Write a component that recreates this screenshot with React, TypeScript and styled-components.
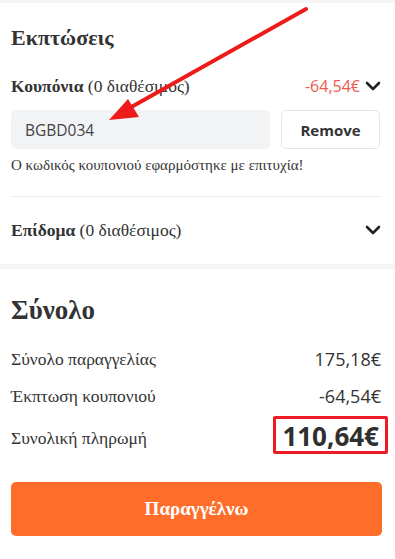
import React from "react";
import styled, {createGlobalStyle} from "styled-components";

const GlobalStyle = createGlobalStyle`
  body {
    margin: 0;
    background: #ffffff;
    font-family: "Liberation Serif", "Times New Roman", serif;
    color: #333333;
  }
`;

const Page = styled.div`
  position: relative;
  width: 395px;
  display: flex;
  flex-direction: column;
`;

const Band = styled.div<{ h: number }>`
  height: ${p => p.h}px;
  background: #f4f4f5;
`;

const Section = styled.section`
  display: flex;
  flex-direction: column;
  padding: 0 14px 0 11px;
`;

const Heading = styled.h2<{ size: number }>`
  margin: 0;
  font-size: ${p => p.size}px;
  font-weight: 700;
  line-height: ${p => p.size + 5}px;
  color: #333;
`;

const RowHead = styled.div`
  display: flex;
  justify-content: space-between;
  align-items: center;
  height: 24px;
  font-size: 17.5px;
  line-height: 24px;
`;

const Label = styled.span`
  font-weight: 700;
`;

const Muted = styled.span`
  font-weight: 400;
`;

const RightSide = styled.div`
  display: flex;
  align-items: center;
  gap: 5px;
`;

const Amount = styled.span<{ red?: boolean }>`
  font-family: "Open Sans", sans-serif;
  font-size: ${p => (p.red ? 16 : 18)}px;
  color: ${p => (p.red ? "#ec5a4f" : "#333")};
`;

const CouponRow = styled.div`
  display: flex;
  gap: 11px;
  margin-right: 1px;
`;

const CouponInput = styled.div`
  flex: 1;
  height: 39px;
  display: flex;
  align-items: center;
  padding-left: 14px;
  background: #f2f3f5;
  border-radius: 5px;
  font-family: "Open Sans", sans-serif;
  font-size: 15.5px;
  color: #444;
`;

const RemoveButton = styled.button`
  width: 99px;
  height: 39px;
  background: #fff;
  border: 1px solid #e6e6e6;
  border-radius: 5px;
  font-family: "Open Sans", sans-serif;
  font-weight: 700;
  font-size: 15px;
  color: #333;
`;

const Note = styled.p`
  margin: 0;
  font-size: 15px;
  line-height: 20px;
  color: #333;
`;

const Divider = styled.hr`
  margin: 0;
  border: 0;
  border-top: 1px solid #eeeeee;
`;

const SumRow = styled.div`
  display: flex;
  justify-content: space-between;
  align-items: center;
  font-size: 17.5px;
  line-height: 24px;
`;

const TotalLabel = styled.span`
  padding-top: 6px;
`;

const TotalBox = styled.div`
  border: 3px solid #ee1b24;
  border-radius: 2px;
  margin-right: -7px;
  padding: 2px 6px 0 6px;
  font-family: "Open Sans", sans-serif;
  font-weight: 700;
  font-size: 26px;
  line-height: 30px;
  color: #2f2f2f;
`;

const OrderButton = styled.button`
  height: 54px;
  margin-right: -1px;
  background: #fe6e2a;
  border: 0;
  border-radius: 5px;
  color: #fff;
  font-family: "Liberation Serif", "Times New Roman", serif;
  font-weight: 700;
  font-size: 19px;
`;

const ArrowLayer = styled.svg`
  position: absolute;
  left: 0;
  top: 0;
  pointer-events: none;
`;

const Spacer = styled.div<{ h: number }>`
  height: ${p => p.h}px;
  flex-shrink: 0;
`;

const Chevron = () => (
  <svg width="16" height="10" viewBox="0 0 16 10">
    <path d="M2 2 L8 8 L14 2" fill="none" stroke="#222" strokeWidth="2.6" strokeLinecap="round" strokeLinejoin="round"/>
  </svg>
);

export default function App() {
  return (
    <Page>
      <GlobalStyle/>
      <Band h={3}/>
      <Section>
        <Spacer h={21}/>
        <Heading size={22}>Εκπτώσεις</Heading>
        <Spacer h={23}/>
        <RowHead>
          <span><Label>Κουπόνια</Label> <Muted>(0 διαθέσιμος)</Muted></span>
          <RightSide>
            <Amount red>-64,54€</Amount>
            <Chevron/>
          </RightSide>
        </RowHead>
        <Spacer h={12}/>
        <CouponRow>
          <CouponInput>BGBD034</CouponInput>
          <RemoveButton>Remove</RemoveButton>
        </CouponRow>
        <Spacer h={6}/>
        <Note>Ο κωδικός κουπονιού εφαρμόστηκε με επιτυχία!</Note>
        <Spacer h={21}/>
        <Divider/>
        <Spacer h={21}/>
        <RowHead>
          <span><Label>Επίδομα</Label> <Muted>(0 διαθέσιμος)</Muted></span>
          <Chevron/>
        </RowHead>
        <Spacer h={22}/>
      </Section>
      <Band h={5}/>
      <Section>
        <Spacer h={25}/>
        <Heading size={27}>Σύνολο</Heading>
        <Spacer h={21}/>
        <SumRow>
          <span>Σύνολο παραγγελίας</span>
          <Amount>175,18€</Amount>
        </SumRow>
        <Spacer h={13}/>
        <SumRow>
          <span>Έκπτωση κουπονιού</span>
          <Amount>-64,54€</Amount>
        </SumRow>
        <Spacer h={8}/>
        <SumRow>
          <TotalLabel>Συνολική πληρωμή</TotalLabel>
          <TotalBox>110,64€</TotalBox>
        </SumRow>
        <Spacer h={28}/>
        <OrderButton>Παραγγέλνω</OrderButton>
      </Section>
      <ArrowLayer width="395" height="559">
        <line x1="306" y1="9" x2="126" y2="110" stroke="#ee1b1b" strokeWidth="4" strokeLinecap="round"/>
        <polygon points="109,120 128,99 139,117" fill="#ee1b1b"/>
      </ArrowLayer>
    </Page>
  );
}
